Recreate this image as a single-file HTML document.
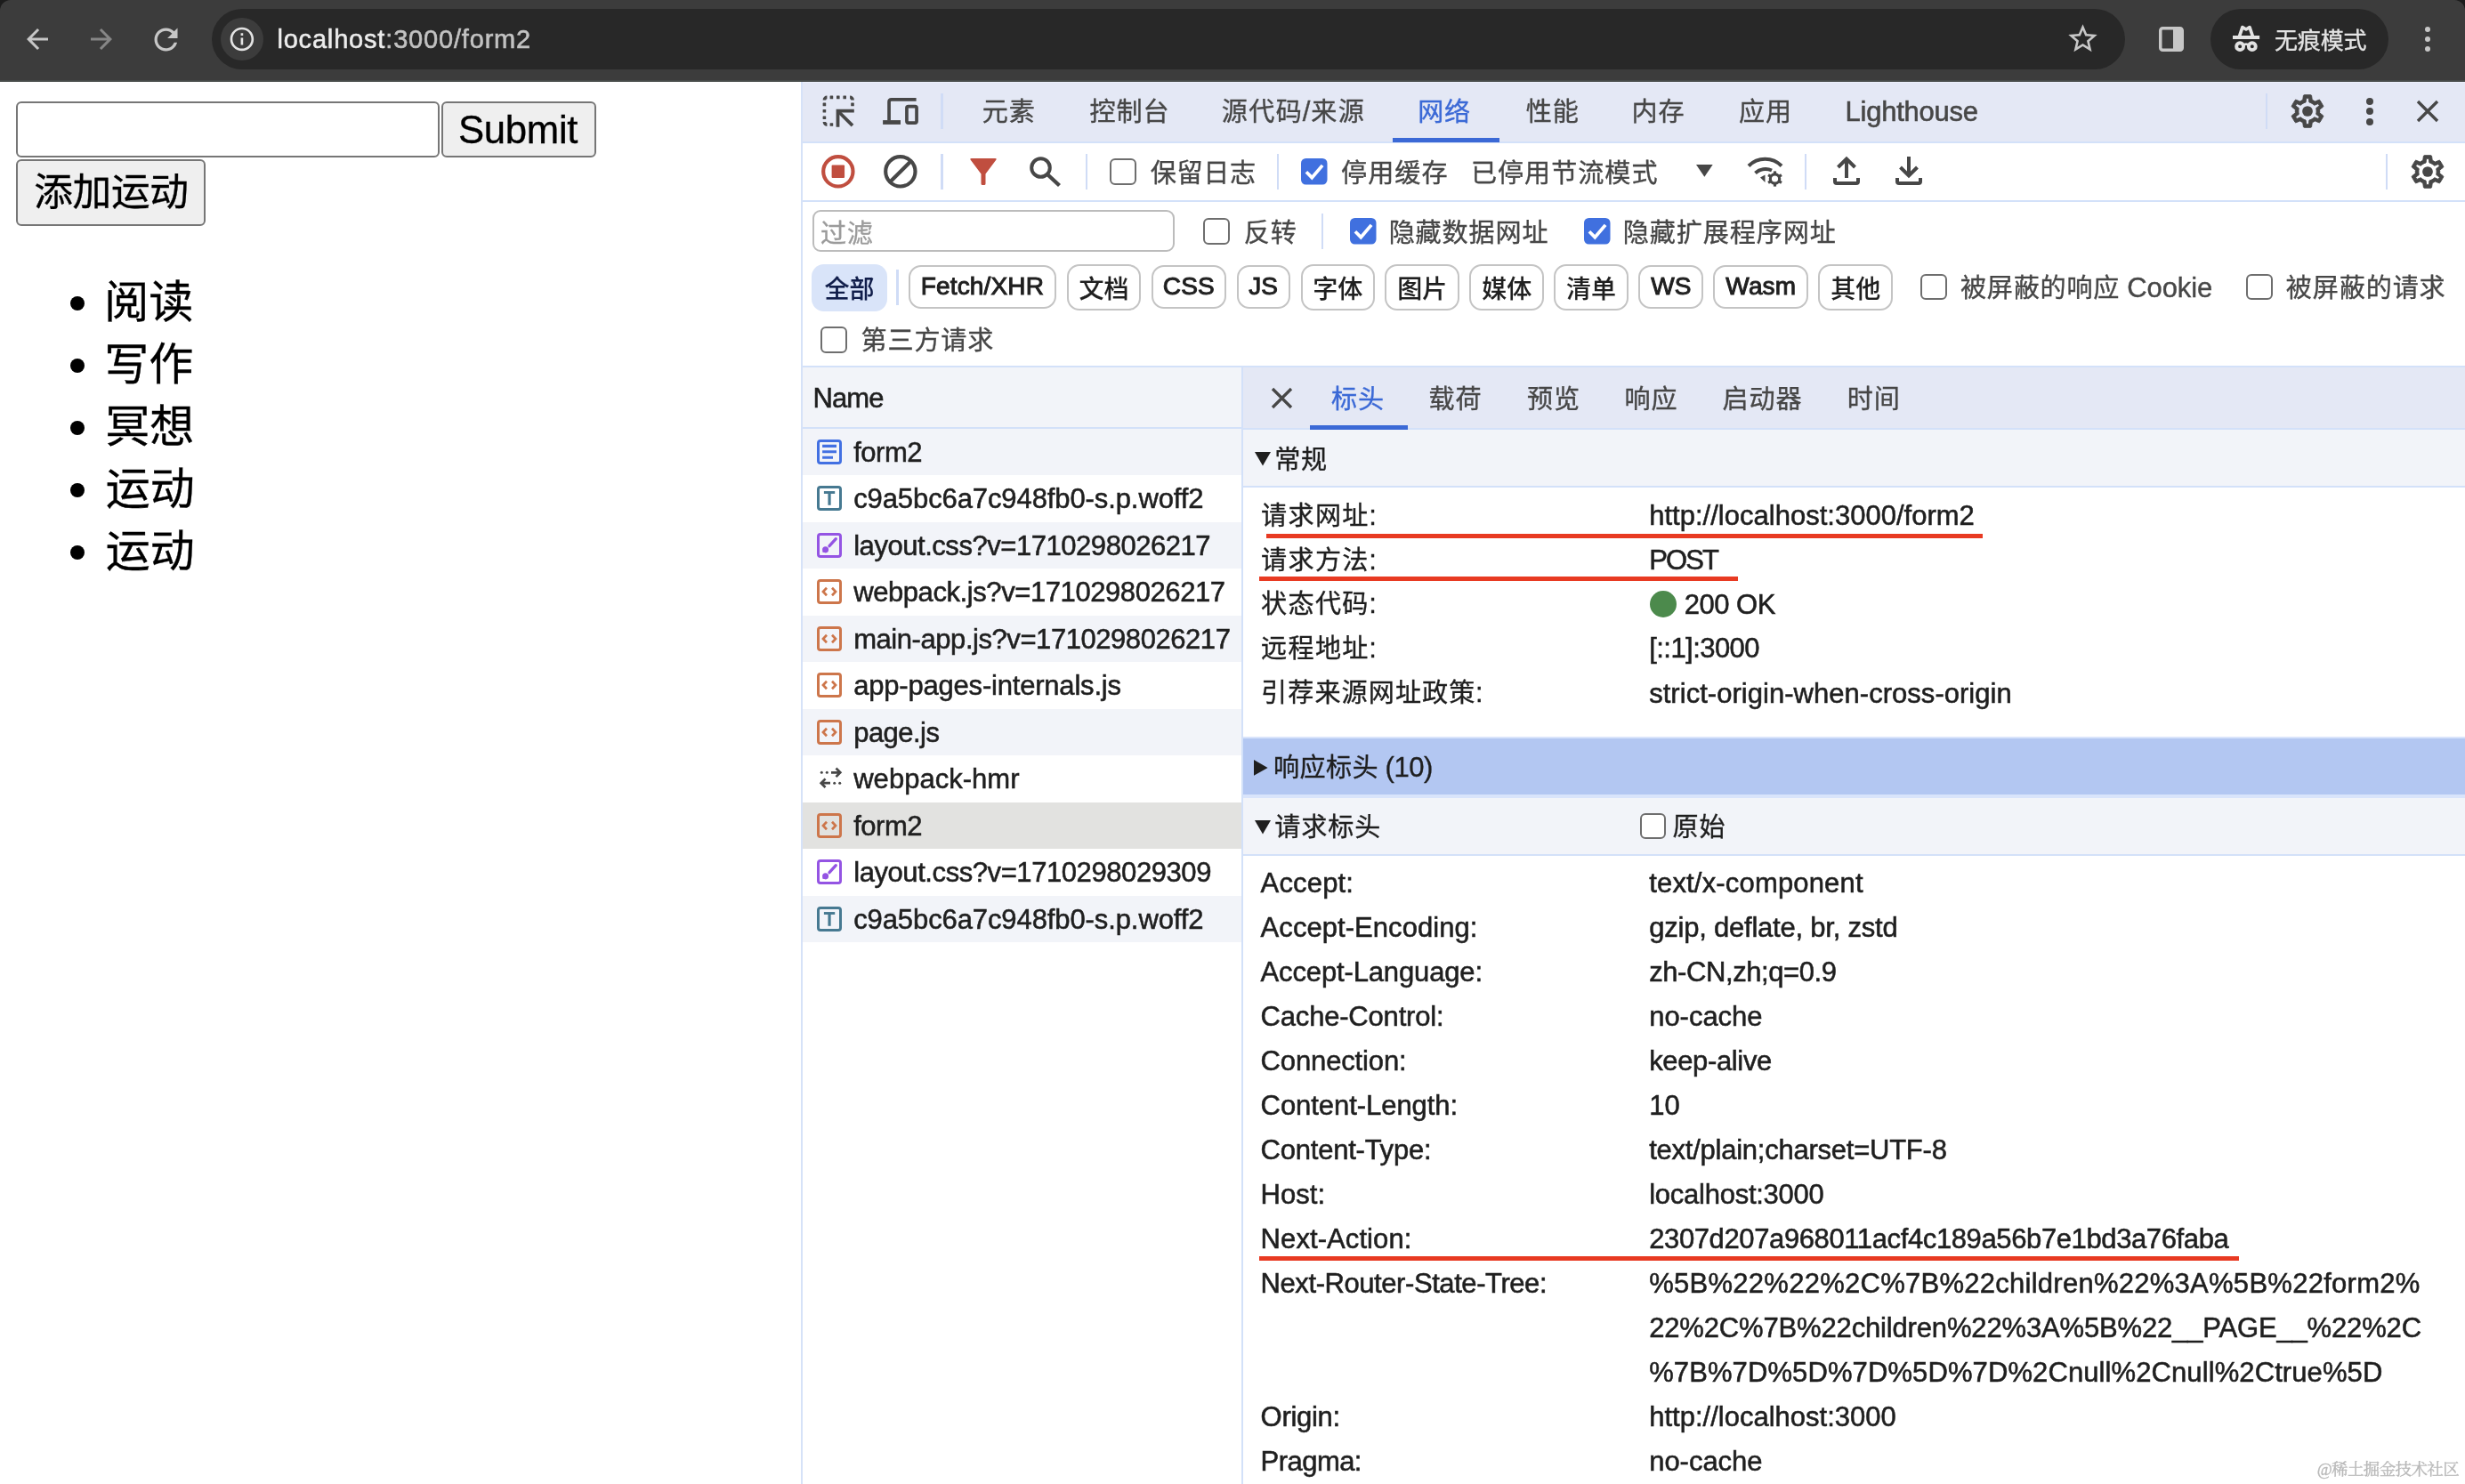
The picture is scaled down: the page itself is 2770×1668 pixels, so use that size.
<!DOCTYPE html>
<html lang="zh-CN"><head><meta charset="utf-8"><title>localhost:3000/form2</title>
<style>
html,body{margin:0;padding:0;}
body{width:2770px;height:1668px;overflow:hidden;background:#fff;position:relative;font-family:"Liberation Sans","Noto Sans CJK SC",sans-serif;will-change:transform;}
div{position:absolute;box-sizing:border-box;}
svg{position:absolute;overflow:visible;}
.t{white-space:nowrap;-webkit-text-stroke:0.35px;}
.l{-webkit-text-stroke:0.55px;}
.mc{font-weight:500;-webkit-text-stroke:0.1px;}
.ml{font-weight:400;-webkit-text-stroke:1px;letter-spacing:0.15px;}
</style></head>
<body>
<div style="left:0px;top:0px;width:2770px;height:92px;background:#3c3c3c;"></div>
<div style="left:0px;top:89.5px;width:2770px;height:2.4px;background:#464a48;"></div>
<svg style="left:0px;top:0px" width="14" height="14" viewBox="0 0 14 14" ><path d="M0 0H12A12 12 0 0 0 0 12Z" fill="#1c1c1c"/></svg>
<svg style="left:2756px;top:0px" width="14" height="14" viewBox="0 0 14 14" ><path d="M14 0H2A12 12 0 0 1 14 12Z" fill="#1c1c1c"/></svg>
<svg style="left:24px;top:26px" width="36" height="36" viewBox="0 0 24 24" ><path d="M20 11H7.83l5.59-5.59L12 4l-8 8 8 8 1.41-1.41L7.83 13H20v-2z" fill="#c7c7c7"/></svg>
<svg style="left:96px;top:26px" width="36" height="36" viewBox="0 0 24 24" ><path d="M12 4l-1.41 1.41L16.17 11H4v2h12.17l-5.58 5.59L12 20l8-8z" fill="#868686"/></svg>
<svg style="left:166.5px;top:24.5px" width="39" height="39" viewBox="0 0 24 24" ><path d="M17.65 6.35C16.2 4.9 14.21 4 12 4c-4.42 0-7.99 3.58-7.99 8s3.57 8 7.99 8c3.73 0 6.84-2.55 7.73-6h-2.08c-.82 2.33-3.04 4-5.65 4-3.31 0-6-2.69-6-6s2.69-6 6-6c1.66 0 3.14.69 4.22 1.78L13 11h7V4l-2.35 2.35z" fill="#c7c7c7"/></svg>
<div style="left:238px;top:9.5px;width:2150px;height:68px;background:#282828;border-radius:34px;"></div>
<div style="left:248px;top:20px;width:48px;height:48px;background:#3c3c3c;border-radius:24px;"></div>
<svg style="left:255.8px;top:28.1px" width="31.8" height="31.8" viewBox="0 0 24 24" ><path d="M11 7h2v2h-2zm0 4h2v6h-2zm1-9C6.48 2 2 6.48 2 12s4.48 10 10 10 10-4.48 10-10S17.52 2 12 2zm0 18c-4.41 0-8-3.59-8-8s3.59-8 8-8 8 3.59 8 8-3.59 8-8 8z" fill="#e3e3e3"/></svg>
<div class="t l" style="left:311.4px;top:24.2px;font-size:29px;line-height:40px;color:#ececec;letter-spacing:0.821px;">localhost<span style="color:#c2c2c2">:3000/form2</span></div>
<svg style="left:2320.5px;top:23.5px" width="39" height="39" viewBox="0 0 24 24" ><path d="M22 9.24l-7.19-.62L12 2 9.19 8.63 2 9.24l5.46 4.73L5.82 21 12 17.27 18.18 21l-1.63-7.03L22 9.24zM12 15.4l-3.76 2.27 1-4.28-3.32-2.88 4.38-.38L12 6.1l1.71 4.04 4.38.38-3.32 2.88 1 4.28L12 15.4z" fill="#c7c7c7"/></svg>
<svg style="left:2426px;top:30px" width="28" height="28" viewBox="0 0 28 28" ><rect x="1.75" y="1.75" width="24.5" height="24.5" rx="2.5" fill="none" stroke="#c7c7c7" stroke-width="3.5"/><rect x="16" y="2" width="10" height="24" fill="#c7c7c7"/></svg>
<div style="left:2484px;top:9.5px;width:200px;height:68px;background:#282828;border-radius:34px;"></div>
<svg style="left:2505px;top:26px" width="40" height="36" viewBox="2505 26 40 36" ><g fill="none" stroke="#e3e3e3" stroke-linejoin="round"><path d="M2509 42H2539.100" stroke-width="4"/><path d="M2516.600 40.500L2519.900 30.600L2524 33L2528 30.600L2531.300 40.500" stroke-width="3.700"/><circle cx="2517.100" cy="52.200" r="3.950" stroke-width="3.900"/><circle cx="2530.800" cy="52.200" r="3.950" stroke-width="3.900"/><path d="M2520.300 50.800Q2524 48.300 2527.600 50.800" stroke-width="2.700"/></g></svg>
<div class="t " style="left:2556.0px;top:25.5px;font-size:26px;line-height:40px;color:#e3e3e3;letter-spacing:-0.167px;">无痕模式</div>
<div style="left:2724.8px;top:29.8px;width:6.4px;height:6.4px;background:#c7c7c7;border-radius:50%;"></div>
<div style="left:2724.8px;top:40.8px;width:6.4px;height:6.4px;background:#c7c7c7;border-radius:50%;"></div>
<div style="left:2724.8px;top:51.8px;width:6.4px;height:6.4px;background:#c7c7c7;border-radius:50%;"></div>
<div style="left:18px;top:114px;width:476px;height:63px;background:#fff;border:2px solid #767676;border-radius:6px;"></div>
<div style="left:496px;top:114px;width:174px;height:63px;background:#efefef;border:2px solid #767676;border-radius:6px;"></div>
<div class="t " style="left:514.9px;top:116.0px;font-size:43.7px;line-height:60px;color:#000;letter-spacing:-0.28px;">Submit</div>
<div style="left:18px;top:179px;width:212.5px;height:74.5px;background:#efefef;border:2px solid #767676;border-radius:6px;"></div>
<div class="t " style="left:38.2px;top:186.0px;font-size:43.7px;line-height:60px;color:#000;letter-spacing:-0.3px;">添加运动</div>
<div style="left:79px;top:332.5px;width:16px;height:16px;background:#000;border-radius:50%;"></div>
<div class="t " style="left:117.25px;top:305.3px;font-size:50px;line-height:70px;color:#000;">阅读</div>
<div style="left:79px;top:402.5px;width:16px;height:16px;background:#000;border-radius:50%;"></div>
<div class="t " style="left:117.25px;top:375.3px;font-size:50px;line-height:70px;color:#000;">写作</div>
<div style="left:79px;top:472.5px;width:16px;height:16px;background:#000;border-radius:50%;"></div>
<div class="t " style="left:118.25px;top:445.3px;font-size:50px;line-height:70px;color:#000;">冥想</div>
<div style="left:79px;top:542.5px;width:16px;height:16px;background:#000;border-radius:50%;"></div>
<div class="t " style="left:118.75px;top:515.3px;font-size:50px;line-height:70px;color:#000;">运动</div>
<div style="left:79px;top:612.5px;width:16px;height:16px;background:#000;border-radius:50%;"></div>
<div class="t " style="left:118.75px;top:585.3px;font-size:50px;line-height:70px;color:#000;">运动</div>
<div style="left:900px;top:92px;width:1870px;height:1576px;background:#fff;"></div>
<div style="left:900px;top:92px;width:1.9px;height:1576px;background:#d6e2f8;"></div>
<div style="left:901.9px;top:92px;width:1868.1px;height:66.5px;background:#e4e8f5;"></div>
<div style="left:901.9px;top:92px;width:1868.1px;height:1.2px;background:#ecf0fb;"></div>
<div style="left:901.9px;top:158.5px;width:1868.1px;height:2px;background:#d3e1f9;"></div>
<svg style="left:924px;top:107px" width="35.5" height="35.5" viewBox="0 0 35.5 35.5" ><g fill="#474747"><rect x="8.6" y="0.6" width="3.6" height="3.6" rx="0.5"/><rect x="16" y="0.6" width="3.6" height="3.6" rx="0.5"/><rect x="23.4" y="0.6" width="3.6" height="3.6" rx="0.5"/><rect x="0.6" y="8.6" width="3.6" height="3.6" rx="0.5"/><rect x="0.6" y="16" width="3.6" height="3.6" rx="0.5"/><rect x="0.6" y="23.4" width="3.6" height="3.6" rx="0.5"/><rect x="8.6" y="31.2" width="3.6" height="3.6" rx="0.5"/><rect x="32.2" y="8.6" width="3.6" height="3.6" rx="0.5"/></g><g fill="none" stroke="#474747" stroke-width="3.600"><path d="M2.400 5.400A3 3 0 0 1 5.400 2.400"/><path d="M31.100 2.400A3 3 0 0 1 34.100 5.400"/><path d="M2.400 30.100A3 3 0 0 0 5.400 33.100"/></g><path d="M35.800 17.700H17.500V35.800" fill="none" stroke="#474747" stroke-width="3.800"/><path d="M18.300 18.500L34 34.200" fill="none" stroke="#474747" stroke-width="3.800"/></svg>
<svg style="left:992px;top:110px" width="40" height="30" viewBox="0 0 40 30" ><path d="M37.600 1.900H9.800Q7.050 1.900 7.050 4.600V25.500" fill="none" stroke="#474747" stroke-width="3.700"/><path d="M0.100 27.500H20" fill="none" stroke="#474747" stroke-width="4.800"/><rect x="26.950" y="9.550" width="11.100" height="18.500" rx="1.800" fill="none" stroke="#474747" stroke-width="3.700"/></svg>
<div style="left:1057px;top:104.5px;width:2.5px;height:40px;background:#d0dcf6;"></div>
<div class="t " style="left:1103.25px;top:105.5px;font-size:30px;line-height:40px;color:#474747;"><span style="font-size:29.1px;letter-spacing:0.9px;margin-left:0.45px;margin-right:-0.45px">元素</span></div>
<div class="t " style="left:1224.1px;top:105.5px;font-size:30px;line-height:40px;color:#474747;"><span style="font-size:29.1px;letter-spacing:0.9px;margin-left:0.45px;margin-right:-0.45px">控制台</span></div>
<div class="t " style="left:1372.3px;top:105.5px;font-size:31px;line-height:40px;color:#474747;letter-spacing:0.48px;"><span style="font-size:29.1px;letter-spacing:1.38px;margin-left:0.45px;margin-right:-0.45px">源代码</span>/<span style="font-size:29.1px;letter-spacing:1.38px;margin-left:0.45px;margin-right:-0.45px">来源</span></div>
<div class="t " style="left:1592.7px;top:105.5px;font-size:30px;line-height:40px;color:#3b69d6;"><span style="font-size:29.1px;letter-spacing:0.9px;margin-left:0.45px;margin-right:-0.45px">网络</span></div>
<div class="t " style="left:1714.3px;top:105.5px;font-size:30px;line-height:40px;color:#474747;"><span style="font-size:29.1px;letter-spacing:0.9px;margin-left:0.45px;margin-right:-0.45px">性能</span></div>
<div class="t " style="left:1833.1px;top:105.5px;font-size:30px;line-height:40px;color:#474747;"><span style="font-size:29.1px;letter-spacing:0.9px;margin-left:0.45px;margin-right:-0.45px">内存</span></div>
<div class="t " style="left:1953.55px;top:105.5px;font-size:30px;line-height:40px;color:#474747;"><span style="font-size:29.1px;letter-spacing:0.9px;margin-left:0.45px;margin-right:-0.45px">应用</span></div>
<div class="t  l" style="left:2073.5px;top:105.5px;font-size:31px;line-height:40px;color:#474747;letter-spacing:-0.244px;">Lighthouse</div>
<div style="left:1565px;top:155px;width:120px;height:4.5px;background:#3b69d6;"></div>
<div style="left:2545.5px;top:104.5px;width:2.5px;height:40px;background:#d0dcf6;"></div>
<svg style="left:2571px;top:103px" width="44" height="44" viewBox="0 0 24 24" ><path fill="#474747" stroke="#474747" stroke-width="0.5" stroke-linejoin="round" fill-rule="evenodd" d="M19.43 12.98c.04-.32.07-.64.07-.98s-.03-.66-.07-.98l2.11-1.65c.19-.15.24-.42.12-.64l-2-3.46c-.12-.22-.39-.3-.61-.22l-2.49 1c-.52-.4-1.08-.73-1.69-.98l-.38-2.65C14.46 2.18 14.25 2 14 2h-4c-.25 0-.46.18-.49.42l-.38 2.65c-.61.25-1.17.59-1.69.98l-2.49-1c-.23-.09-.49 0-.61.22l-2 3.46c-.13.22-.07.49.12.64l2.11 1.65c-.04.32-.07.65-.07.98s.03.66.07.98l-2.11 1.65c-.19.15-.24.42-.12.64l2 3.46c.12.22.39.3.61.22l2.49-1c.52.4 1.08.73 1.69.98l.38 2.65c.03.24.24.42.49.42h4c.25 0 .46-.18.49-.42l.38-2.65c.61-.25 1.17-.59 1.69-.98l2.49 1c.23.09.49 0 .61-.22l2-3.46c.12-.22.07-.49-.12-.64l-2.11-1.65zm-1.98-1.71c.04.31.05.52.05.73 0 .21-.02.43-.05.73l-.14 1.13.89.7 1.08.84-.7 1.21-1.27-.51-1.04-.42-.9.68c-.43.32-.84.56-1.25.73l-1.06.43-.16 1.13-.2 1.35h-1.4l-.19-1.35-.16-1.13-1.06-.43c-.43-.18-.83-.41-1.23-.71l-.91-.7-1.06.43-1.27.51-.7-1.21 1.08-.84.89-.7-.14-1.13c-.03-.31-.05-.54-.05-.74s.02-.43.05-.73l.14-1.13-.89-.7-1.08-.84.7-1.21 1.27.51 1.04.42.9-.68c.43-.32.84-.56 1.25-.73l1.060-.43.16-1.13.2-1.35h1.39l.19 1.350.16 1.130 1.060.430c.430.180.830.410 1.230.710l.910.700 1.060-.430 1.270-.510.700 1.210-1.070.850-.890.700.140 1.130z"/><circle cx="12" cy="12" r="3.2" fill="#474747"/></svg>
<div style="left:2659px;top:109.5px;width:8px;height:8px;background:#474747;border-radius:50%;"></div>
<div style="left:2659px;top:121px;width:8px;height:8px;background:#474747;border-radius:50%;"></div>
<div style="left:2659px;top:132.5px;width:8px;height:8px;background:#474747;border-radius:50%;"></div>
<svg style="left:2716px;top:113px" width="24" height="24" viewBox="0 0 24 24" ><path d="M1 1L23 23M23 1L1 23" stroke="#474747" stroke-width="3.4" fill="none"/></svg>
<div style="left:901.9px;top:225.3px;width:1868.1px;height:2px;background:#d3e1f9;"></div>
<svg style="left:923px;top:174px" width="37.7" height="37.7" viewBox="0 0 38 38" ><circle cx="19" cy="19" r="16.8" fill="none" stroke="#c04e3f" stroke-width="4.2"/><rect x="11.7" y="11.7" width="14.6" height="14.6" rx="1" fill="#c04e3f"/></svg>
<svg style="left:993px;top:174px" width="37.7" height="37.7" viewBox="0 0 38 38" ><circle cx="19" cy="19" r="16.8" fill="none" stroke="#474747" stroke-width="4.2"/><path d="M30.5 7.5L7.5 30.5" stroke="#474747" stroke-width="4.2"/></svg>
<div style="left:1057px;top:173px;width:2.5px;height:40px;background:#d0dcf6;"></div>
<svg style="left:1090px;top:178px" width="30" height="30" viewBox="0 0 30 30" ><path d="M1.5 0H28.5Q30.5 0 29.3 1.8L17.5 17.5V28.5Q17.500 30 16 30H14Q12.500 30 12.500 28.500V17.500L0.700 1.800Q-0.500 0 1.500 0Z" fill="#c04e3f"/></svg>
<svg style="left:1157px;top:176px" width="35" height="34" viewBox="0 0 35 34" ><circle cx="12.5" cy="12.5" r="10.3" fill="none" stroke="#474747" stroke-width="4"/><path d="M20 20L33.500 32.500" stroke="#474747" stroke-width="4.400"/></svg>
<div style="left:1220px;top:173px;width:2px;height:40px;background:#d0dcf6;"></div>
<div style="left:1247px;top:178.3px;width:29.5px;height:29.5px;background:#fff;border:2.5px solid #6e6e6e;border-radius:6px;"></div>
<div class="t " style="left:1292.4px;top:174.5px;font-size:30px;line-height:40px;color:#474747;letter-spacing:-0.267px;"><span style="font-size:29.1px;letter-spacing:0.63px;margin-left:0.45px;margin-right:-0.45px">保留日志</span></div>
<div style="left:1435px;top:173px;width:2px;height:40px;background:#d0dcf6;"></div>
<svg style="left:1462px;top:178.3px" width="29.5" height="29.5" viewBox="0 0 30 30" ><rect width="30" height="30" rx="5.5" fill="#4070df"/><path d="M6 15.500L12.500 22L24.500 8" fill="none" stroke="#fff" stroke-width="3.800"/></svg>
<div class="t " style="left:1506.5px;top:174.5px;font-size:30px;line-height:40px;color:#474747;letter-spacing:0.2px;"><span style="font-size:29.1px;letter-spacing:1.1px;margin-left:0.45px;margin-right:-0.45px">停用缓存</span></div>
<div class="t " style="left:1652.5px;top:174.5px;font-size:30px;line-height:40px;color:#474747;letter-spacing:0.083px;"><span style="font-size:29.1px;letter-spacing:0.98px;margin-left:0.45px;margin-right:-0.45px">已停用节流模式</span></div>
<svg style="left:1906.3px;top:185px" width="18.7" height="13.8" viewBox="0 0 18.7 13.8" ><path d="M0 0H18.700L9.350 13.800Z" fill="#474747"/></svg>
<svg style="left:1963px;top:175px" width="41" height="34" viewBox="0 0 41 34" ><path d="M2 11.5A26 26 0 0 1 39 11.500" fill="none" stroke="#474747" stroke-width="4"/><path d="M9.500 19.500A17.500 17.500 0 0 1 28 16.500" fill="none" stroke="#474747" stroke-width="4"/><path d="M15 24.500L20.500 21.500V30Z" fill="#474747"/><g transform="translate(31.500 26)"><circle r="5.200" fill="none" stroke="#474747" stroke-width="3.200"/><rect x="-1.600" y="-8.600" width="3.200" height="3.400" fill="#474747" transform="rotate(0)"/><rect x="-1.600" y="-8.600" width="3.200" height="3.400" fill="#474747" transform="rotate(60)"/><rect x="-1.600" y="-8.600" width="3.200" height="3.400" fill="#474747" transform="rotate(120)"/><rect x="-1.600" y="-8.600" width="3.200" height="3.400" fill="#474747" transform="rotate(180)"/><rect x="-1.600" y="-8.600" width="3.200" height="3.400" fill="#474747" transform="rotate(240)"/><rect x="-1.600" y="-8.600" width="3.200" height="3.400" fill="#474747" transform="rotate(300)"/></g></svg>
<div style="left:2028px;top:173px;width:2px;height:40px;background:#d0dcf6;"></div>
<svg style="left:2060px;top:176px" width="30" height="32" viewBox="0 0 30 32" ><path d="M15 24V3.500M5.500 12L15 2.500L24.500 12" fill="none" stroke="#474747" stroke-width="4"/><path d="M2 24V28Q2 30 4 30H26Q28 30 28 28V24" fill="none" stroke="#474747" stroke-width="4"/></svg>
<svg style="left:2130px;top:176px" width="30" height="32" viewBox="0 0 30 32" ><path d="M15 0V20.500M5.500 12L15 21.500L24.500 12" fill="none" stroke="#474747" stroke-width="4"/><path d="M2 24V28Q2 30 4 30H26Q28 30 28 28V24" fill="none" stroke="#474747" stroke-width="4"/></svg>
<div style="left:2680.5px;top:173px;width:2.5px;height:40px;background:#d0dcf6;"></div>
<svg style="left:2706px;top:171px" width="44" height="44" viewBox="0 0 24 24" ><path fill="#474747" stroke="#474747" stroke-width="0.5" stroke-linejoin="round" fill-rule="evenodd" d="M19.43 12.98c.04-.32.07-.64.07-.98s-.03-.66-.07-.98l2.11-1.65c.19-.15.24-.42.12-.64l-2-3.46c-.12-.22-.39-.3-.61-.22l-2.49 1c-.52-.4-1.08-.73-1.69-.98l-.38-2.65C14.46 2.18 14.25 2 14 2h-4c-.25 0-.46.18-.49.42l-.38 2.65c-.61.25-1.17.59-1.69.98l-2.49-1c-.23-.09-.49 0-.61.22l-2 3.46c-.13.22-.07.49.12.64l2.11 1.65c-.04.32-.07.65-.07.98s.03.66.07.98l-2.11 1.65c-.19.15-.24.42-.12.64l2 3.46c.12.22.39.3.61.22l2.49-1c.52.4 1.08.73 1.69.98l.38 2.65c.03.24.24.42.49.42h4c.25 0 .46-.18.49-.42l.38-2.65c.61-.25 1.17-.59 1.69-.98l2.49 1c.23.09.49 0 .61-.22l2-3.46c.12-.22.07-.49-.12-.64l-2.11-1.65zm-1.98-1.71c.04.31.05.52.05.73 0 .21-.02.43-.05.73l-.14 1.13.89.7 1.08.84-.7 1.21-1.27-.51-1.04-.42-.9.68c-.43.32-.84.56-1.25.73l-1.06.43-.16 1.13-.2 1.35h-1.4l-.19-1.35-.16-1.13-1.06-.43c-.43-.18-.83-.41-1.23-.71l-.91-.7-1.06.43-1.27.51-.7-1.21 1.08-.84.89-.7-.14-1.13c-.03-.31-.05-.54-.05-.74s.02-.43.05-.73l.14-1.13-.89-.7-1.08-.84.7-1.21 1.27.51 1.04.42.9-.68c.43-.32.84-.56 1.25-.73l1.060-.43.16-1.13.2-1.35h1.39l.19 1.350.16 1.130 1.060.430c.430.180.830.410 1.230.710l.910.700 1.060-.430 1.270-.510.700 1.210-1.070.850-.890.700.140 1.130z"/><circle cx="12" cy="12" r="3.2" fill="#474747"/></svg>
<div style="left:912.5px;top:235.5px;width:407px;height:47.5px;background:#fff;border:2px solid #bcbcbc;border-radius:9px;"></div>
<div class="t " style="left:921.45px;top:242.5px;font-size:30px;line-height:40px;color:#9b9b9b;"><span style="font-size:29.1px;letter-spacing:0.9px;margin-left:0.45px;margin-right:-0.45px">过滤</span></div>
<div style="left:1352.3px;top:245.2px;width:29.5px;height:29.5px;background:#fff;border:2.5px solid #6e6e6e;border-radius:6px;"></div>
<div class="t " style="left:1397.3px;top:242.0px;font-size:30px;line-height:40px;color:#474747;"><span style="font-size:29.1px;letter-spacing:0.9px;margin-left:0.45px;margin-right:-0.45px">反转</span></div>
<div style="left:1485px;top:240px;width:2px;height:40px;background:#d0dcf6;"></div>
<svg style="left:1517px;top:245.2px" width="29.5" height="29.5" viewBox="0 0 30 30" ><rect width="30" height="30" rx="5.5" fill="#4070df"/><path d="M6 15.500L12.500 22L24.500 8" fill="none" stroke="#fff" stroke-width="3.800"/></svg>
<div class="t " style="left:1560.2px;top:242.0px;font-size:30px;line-height:40px;color:#474747;"><span style="font-size:29.1px;letter-spacing:0.9px;margin-left:0.45px;margin-right:-0.45px">隐藏数据网址</span></div>
<svg style="left:1780px;top:245.2px" width="29.5" height="29.5" viewBox="0 0 30 30" ><rect width="30" height="30" rx="5.5" fill="#4070df"/><path d="M6 15.500L12.500 22L24.500 8" fill="none" stroke="#fff" stroke-width="3.800"/></svg>
<div class="t " style="left:1823.2px;top:242.0px;font-size:30px;line-height:40px;color:#474747;letter-spacing:0.043px;"><span style="font-size:29.1px;letter-spacing:0.94px;margin-left:0.45px;margin-right:-0.45px">隐藏扩展程序网址</span></div>
<div style="left:912px;top:297px;width:85px;height:53px;background:#d9e4f9;border-radius:14px;"></div>
<div class="t mc" style="left:926.5px;top:305.8px;font-size:28px;line-height:40px;color:#101d4a;">全部</div>
<div style="left:1007.3px;top:303px;width:2.4px;height:40px;background:#d0dcf6;"></div>
<div class="t ml" style="left:1020.5px;top:298.3px;width:166.8px;height:48.3px;border:2px solid #c4c4c4;border-radius:14px;font-size:28px;line-height:44.5px;text-align:center;color:#1f1f1f;">Fetch/XHR</div>
<div class="t mc" style="left:1198.6px;top:297.3px;width:83.7px;height:51.8px;border:2px solid #c4c4c4;border-radius:14px;font-size:28px;line-height:53px;text-align:center;color:#1f1f1f;">文档</div>
<div class="t ml" style="left:1293.6px;top:298.3px;width:84.4px;height:48.3px;border:2px solid #c4c4c4;border-radius:14px;font-size:28px;line-height:44.5px;text-align:center;color:#1f1f1f;">CSS</div>
<div class="t ml" style="left:1389.6px;top:298.3px;width:60.2px;height:48.3px;border:2px solid #c4c4c4;border-radius:14px;font-size:28px;line-height:44.5px;text-align:center;color:#1f1f1f;">JS</div>
<div class="t mc" style="left:1461.5px;top:297.3px;width:83.7px;height:51.8px;border:2px solid #c4c4c4;border-radius:14px;font-size:28px;line-height:53px;text-align:center;color:#1f1f1f;">字体</div>
<div class="t mc" style="left:1556.4px;top:297.3px;width:83.6px;height:51.8px;border:2px solid #c4c4c4;border-radius:14px;font-size:28px;line-height:53px;text-align:center;color:#1f1f1f;">图片</div>
<div class="t mc" style="left:1651.4px;top:297.3px;width:83.9px;height:51.8px;border:2px solid #c4c4c4;border-radius:14px;font-size:28px;line-height:53px;text-align:center;color:#1f1f1f;">媒体</div>
<div class="t mc" style="left:1746.3px;top:297.3px;width:83.6px;height:51.8px;border:2px solid #c4c4c4;border-radius:14px;font-size:28px;line-height:53px;text-align:center;color:#1f1f1f;">清单</div>
<div class="t ml" style="left:1841.4px;top:298.3px;width:72.9px;height:48.3px;border:2px solid #c4c4c4;border-radius:14px;font-size:28px;line-height:44.5px;text-align:center;color:#1f1f1f;">WS</div>
<div class="t ml" style="left:1925.4px;top:298.3px;width:106.8px;height:48.3px;border:2px solid #c4c4c4;border-radius:14px;font-size:28px;line-height:44.5px;text-align:center;color:#1f1f1f;">Wasm</div>
<div class="t mc" style="left:2043.4px;top:297.3px;width:83.6px;height:51.8px;border:2px solid #c4c4c4;border-radius:14px;font-size:28px;line-height:53px;text-align:center;color:#1f1f1f;">其他</div>
<div style="left:2158px;top:307.5px;width:29.5px;height:29.5px;background:#fff;border:2.5px solid #6e6e6e;border-radius:6px;"></div>
<div class="t " style="left:2202.5px;top:304.0px;font-size:31px;line-height:40px;color:#474747;letter-spacing:-0.108px;"><span style="font-size:29.1px;letter-spacing:0.79px;margin-left:0.45px;margin-right:-0.45px">被屏蔽的响应</span> Cookie</div>
<div style="left:2524.3px;top:307.5px;width:29.5px;height:29.5px;background:#fff;border:2.5px solid #6e6e6e;border-radius:6px;"></div>
<div class="t " style="left:2568.3px;top:304.0px;font-size:30px;line-height:40px;color:#474747;letter-spacing:-0.02px;"><span style="font-size:29.1px;letter-spacing:0.88px;margin-left:0.45px;margin-right:-0.45px">被屏蔽的请求</span></div>
<div style="left:922px;top:367px;width:29.5px;height:29.5px;background:#fff;border:2.5px solid #6e6e6e;border-radius:6px;"></div>
<div class="t " style="left:967.1px;top:362.5px;font-size:30px;line-height:40px;color:#474747;letter-spacing:-0.05px;"><span style="font-size:29.1px;letter-spacing:0.85px;margin-left:0.45px;margin-right:-0.45px">第三方请求</span></div>
<div style="left:901.9px;top:411px;width:1868.1px;height:2px;background:#d3e1f9;"></div>
<div style="left:901.9px;top:413px;width:493.1px;height:68px;background:#f2f4f9;"></div>
<div style="left:901.9px;top:480px;width:493.1px;height:2px;background:#d3e1f9;"></div>
<div class="t  l" style="left:913.5px;top:427.5px;font-size:31px;line-height:40px;color:#1f1f1f;letter-spacing:-0.933px;">Name</div>
<div style="left:901.9px;top:481.6px;width:493.1px;height:52.7px;background:#f2f4f9;"></div>
<svg style="left:918px;top:493.8px" width="28" height="28" viewBox="0 0 28 28" ><rect x="1.5" y="1.5" width="25" height="25" rx="2.5" fill="none" stroke="#4270e2" stroke-width="3"/><path d="M6.100 7.400H22M6.100 13.800H22M6.100 20.200H18" stroke="#4270e2" stroke-width="3.100" fill="none"/></svg>
<div class="t  l" style="left:959.2px;top:488.8px;font-size:31px;line-height:40px;color:#1f1f1f;letter-spacing:-0.475px;">form2</div>
<div style="left:901.9px;top:534px;width:493.1px;height:52.8px;background:#fff;"></div>
<svg style="left:918px;top:546.25px" width="28" height="28" viewBox="0 0 28 28" ><rect x="1.5" y="1.5" width="25" height="25" rx="2.5" fill="none" stroke="#467991" stroke-width="3"/><path d="M7.900 7.500H20.200" stroke="#467991" stroke-width="2.900" fill="none"/><path d="M14.050 7.500V21.800" stroke="#467991" stroke-width="3.200" fill="none"/></svg>
<div class="t  l" style="left:959.2px;top:541.25px;font-size:31px;line-height:40px;color:#1f1f1f;letter-spacing:-0.1px;">c9a5bc6a7c948fb0-s.p.woff2</div>
<div style="left:901.9px;top:586.5px;width:493.1px;height:52.6px;background:#f2f4f9;"></div>
<svg style="left:918px;top:598.65px" width="28" height="28" viewBox="0 0 28 28" ><rect x="1.5" y="1.5" width="25" height="25" rx="2.5" fill="none" stroke="#9454e3" stroke-width="3"/><path d="M21.300 6.700L14 14.700" stroke="#9454e3" stroke-width="3.300" stroke-linecap="round" fill="none"/><circle cx="9.600" cy="18.800" r="3.500" fill="#9454e3"/><path d="M5.800 21C7.800 20.600 6.800 18.500 7.500 17.500L11 22C9.500 22.500 7 22 5.800 21Z" fill="#9454e3"/></svg>
<div class="t  l" style="left:959.2px;top:593.65px;font-size:31px;line-height:40px;color:#1f1f1f;letter-spacing:-0.456px;">layout.css?v=1710298026217</div>
<div style="left:901.9px;top:638.8px;width:493.1px;height:53.1px;background:#fff;"></div>
<svg style="left:918px;top:651.2px" width="28" height="28" viewBox="0 0 28 28" ><rect x="1.5" y="1.5" width="25" height="25" rx="2.5" fill="none" stroke="#cd764b" stroke-width="3"/><path d="M11 9.800L7 14L11 18.200M17 9.800L21 14L17 18.200" stroke="#cd764b" stroke-width="2.700" fill="none"/></svg>
<div class="t  l" style="left:959.2px;top:646.2px;font-size:31px;line-height:40px;color:#1f1f1f;letter-spacing:-0.42px;">webpack.js?v=1710298026217</div>
<div style="left:901.9px;top:691.6px;width:493.1px;height:52.6px;background:#f2f4f9;"></div>
<svg style="left:918px;top:703.75px" width="28" height="28" viewBox="0 0 28 28" ><rect x="1.5" y="1.5" width="25" height="25" rx="2.5" fill="none" stroke="#cd764b" stroke-width="3"/><path d="M11 9.800L7 14L11 18.200M17 9.800L21 14L17 18.200" stroke="#cd764b" stroke-width="2.700" fill="none"/></svg>
<div class="t  l" style="left:959.2px;top:698.75px;font-size:31px;line-height:40px;color:#1f1f1f;letter-spacing:-0.442px;">main-app.js?v=1710298026217</div>
<div style="left:901.9px;top:743.9px;width:493.1px;height:53.1px;background:#fff;"></div>
<svg style="left:918px;top:756.3px" width="28" height="28" viewBox="0 0 28 28" ><rect x="1.5" y="1.5" width="25" height="25" rx="2.5" fill="none" stroke="#cd764b" stroke-width="3"/><path d="M11 9.800L7 14L11 18.200M17 9.800L21 14L17 18.200" stroke="#cd764b" stroke-width="2.700" fill="none"/></svg>
<div class="t  l" style="left:959.2px;top:751.3px;font-size:31px;line-height:40px;color:#1f1f1f;letter-spacing:-0.2px;">app-pages-internals.js</div>
<div style="left:901.9px;top:796.7px;width:493.1px;height:52.3px;background:#f2f4f9;"></div>
<svg style="left:918px;top:808.7px" width="28" height="28" viewBox="0 0 28 28" ><rect x="1.5" y="1.5" width="25" height="25" rx="2.5" fill="none" stroke="#cd764b" stroke-width="3"/><path d="M11 9.800L7 14L11 18.200M17 9.800L21 14L17 18.200" stroke="#cd764b" stroke-width="2.700" fill="none"/></svg>
<div class="t  l" style="left:959.2px;top:803.7px;font-size:31px;line-height:40px;color:#1f1f1f;letter-spacing:-0.533px;">page.js</div>
<div style="left:901.9px;top:848.7px;width:493.1px;height:53.7px;background:#fff;"></div>
<svg style="left:918px;top:860.1px" width="28" height="28" viewBox="0 0 28 28" ><g fill="#474747"><circle cx="5.300" cy="8.300" r="1.500"/><circle cx="11.300" cy="8.300" r="1.500"/><circle cx="19.700" cy="20.200" r="1.500"/><circle cx="25.700" cy="20.200" r="1.500"/></g><path d="M16 8.300H26M21.500 3.500L26.300 8.300L21.500 13.100" stroke="#474747" stroke-width="2.700" fill="none"/><path d="M15 20.200H5M9.500 15.400L4.700 20.200L9.500 25" stroke="#474747" stroke-width="2.700" fill="none"/></svg>
<div class="t  l" style="left:959.2px;top:856.4px;font-size:31px;line-height:40px;color:#1f1f1f;letter-spacing:0.03px;">webpack-hmr</div>
<div style="left:901.9px;top:902.1px;width:493.1px;height:51.9px;background:#e2e2e0;"></div>
<svg style="left:918px;top:913.9px" width="28" height="28" viewBox="0 0 28 28" ><rect x="1.5" y="1.5" width="25" height="25" rx="2.5" fill="none" stroke="#cd764b" stroke-width="3"/><path d="M11 9.800L7 14L11 18.200M17 9.800L21 14L17 18.200" stroke="#cd764b" stroke-width="2.700" fill="none"/></svg>
<div class="t  l" style="left:959.2px;top:908.9px;font-size:31px;line-height:40px;color:#1f1f1f;letter-spacing:-0.475px;">form2</div>
<div style="left:901.9px;top:953.7px;width:493.1px;height:53.7px;background:#fff;"></div>
<svg style="left:918px;top:966.4px" width="28" height="28" viewBox="0 0 28 28" ><rect x="1.5" y="1.5" width="25" height="25" rx="2.5" fill="none" stroke="#9454e3" stroke-width="3"/><path d="M21.300 6.700L14 14.700" stroke="#9454e3" stroke-width="3.300" stroke-linecap="round" fill="none"/><circle cx="9.600" cy="18.800" r="3.500" fill="#9454e3"/><path d="M5.800 21C7.800 20.600 6.800 18.500 7.500 17.500L11 22C9.500 22.500 7 22 5.800 21Z" fill="#9454e3"/></svg>
<div class="t  l" style="left:959.2px;top:961.4px;font-size:31px;line-height:40px;color:#1f1f1f;letter-spacing:-0.424px;">layout.css?v=1710298029309</div>
<div style="left:901.9px;top:1007.1px;width:493.1px;height:51.8px;background:#f2f4f9;"></div>
<svg style="left:918px;top:1018.85px" width="28" height="28" viewBox="0 0 28 28" ><rect x="1.5" y="1.5" width="25" height="25" rx="2.5" fill="none" stroke="#467991" stroke-width="3"/><path d="M7.900 7.500H20.200" stroke="#467991" stroke-width="2.900" fill="none"/><path d="M14.050 7.500V21.800" stroke="#467991" stroke-width="3.200" fill="none"/></svg>
<div class="t  l" style="left:959.2px;top:1013.85px;font-size:31px;line-height:40px;color:#1f1f1f;letter-spacing:-0.1px;">c9a5bc6a7c948fb0-s.p.woff2</div>
<div style="left:1394.5px;top:413px;width:2.5px;height:1255px;background:#d3e1f9;"></div>
<div style="left:1397px;top:413px;width:1373px;height:68px;background:#e4e8f5;"></div>
<div style="left:1397px;top:480.5px;width:1373px;height:2px;background:#d3e1f9;"></div>
<svg style="left:1428.5px;top:436px" width="23" height="23" viewBox="0 0 23 23" ><path d="M1 1L22 22M22 1L1 22" stroke="#474747" stroke-width="3.300" fill="none"/></svg>
<div class="t " style="left:1495.6px;top:428.5px;font-size:30px;line-height:40px;color:#3b69d6;"><span style="font-size:29.1px;letter-spacing:0.9px;margin-left:0.45px;margin-right:-0.45px">标头</span></div>
<div class="t " style="left:1605.15px;top:428.5px;font-size:30px;line-height:40px;color:#474747;"><span style="font-size:29.1px;letter-spacing:0.9px;margin-left:0.45px;margin-right:-0.45px">载荷</span></div>
<div class="t " style="left:1715.5px;top:428.5px;font-size:30px;line-height:40px;color:#474747;"><span style="font-size:29.1px;letter-spacing:0.9px;margin-left:0.45px;margin-right:-0.45px">预览</span></div>
<div class="t " style="left:1825.1px;top:428.5px;font-size:30px;line-height:40px;color:#474747;"><span style="font-size:29.1px;letter-spacing:0.9px;margin-left:0.45px;margin-right:-0.45px">响应</span></div>
<div class="t " style="left:1935.0px;top:428.5px;font-size:30px;line-height:40px;color:#474747;"><span style="font-size:29.1px;letter-spacing:0.9px;margin-left:0.45px;margin-right:-0.45px">启动器</span></div>
<div class="t " style="left:2075.25px;top:428.5px;font-size:30px;line-height:40px;color:#474747;"><span style="font-size:29.1px;letter-spacing:0.9px;margin-left:0.45px;margin-right:-0.45px">时间</span></div>
<div style="left:1472px;top:478px;width:110px;height:4.5px;background:#3b69d6;"></div>
<div style="left:1397px;top:482.5px;width:1373px;height:63px;background:#f2f4f9;"></div>
<div style="left:1397px;top:545.5px;width:1373px;height:2px;background:#d3e1f9;"></div>
<svg style="left:1409.6px;top:508.3px" width="18" height="15.6" viewBox="0 0 18 15.6" ><path d="M0 0H18L9 15.600Z" fill="#1f1f1f"/></svg>
<div class="t " style="left:1431.7px;top:496.5px;font-size:30px;line-height:40px;color:#1f1f1f;"><span style="font-size:29.1px;letter-spacing:0.9px;margin-left:0.45px;margin-right:-0.45px">常规</span></div>
<div class="t " style="left:1416.6px;top:559.5px;font-size:31px;line-height:40px;color:#1f1f1f;letter-spacing:0.425px;"><span style="font-size:29.1px;letter-spacing:1.33px;margin-left:0.45px;margin-right:-0.45px">请求网址</span>:</div>
<div class="t  l" style="left:1853.2px;top:560.0px;font-size:31px;line-height:40px;color:#1f1f1f;letter-spacing:0.012px;">http://localhost:3000/form2</div>
<div class="t " style="left:1416.6px;top:609.5px;font-size:31px;line-height:40px;color:#1f1f1f;letter-spacing:0.425px;"><span style="font-size:29.1px;letter-spacing:1.33px;margin-left:0.45px;margin-right:-0.45px">请求方法</span>:</div>
<div class="t  l" style="left:1853.2px;top:610.0px;font-size:31px;line-height:40px;color:#1f1f1f;letter-spacing:-1.9px;">POST</div>
<div class="t " style="left:1416.6px;top:659.0px;font-size:31px;line-height:40px;color:#1f1f1f;letter-spacing:0.425px;"><span style="font-size:29.1px;letter-spacing:1.33px;margin-left:0.45px;margin-right:-0.45px">状态代码</span>:</div>
<div class="t " style="left:1416.6px;top:708.5px;font-size:31px;line-height:40px;color:#1f1f1f;letter-spacing:0.425px;"><span style="font-size:29.1px;letter-spacing:1.33px;margin-left:0.45px;margin-right:-0.45px">远程地址</span>:</div>
<div class="t  l" style="left:1853.2px;top:709.0px;font-size:31px;line-height:40px;color:#1f1f1f;letter-spacing:-0.544px;">[::1]:3000</div>
<div class="t " style="left:1416.6px;top:759.0px;font-size:31px;line-height:40px;color:#1f1f1f;letter-spacing:0.175px;"><span style="font-size:29.1px;letter-spacing:1.08px;margin-left:0.45px;margin-right:-0.45px">引荐来源网址政策</span>:</div>
<div class="t  l" style="left:1853.2px;top:759.5px;font-size:31px;line-height:40px;color:#1f1f1f;letter-spacing:0.033px;">strict-origin-when-cross-origin</div>
<div style="left:1854px;top:664px;width:30px;height:30px;background:#4c8a4c;border-radius:50%;"></div>
<div class="t  l" style="left:1892.7px;top:659.5px;font-size:31px;line-height:40px;color:#1f1f1f;letter-spacing:-0.5px;">200 OK</div>
<div style="left:1422.5px;top:600.2px;width:805.5px;height:4.6px;background:#e83a22;"></div>
<div style="left:1415px;top:648.2px;width:538px;height:4.6px;background:#e83a22;"></div>
<div style="left:1397px;top:827.8px;width:1373px;height:2.5px;background:#d9e4fb;"></div>
<div style="left:1397px;top:829.9px;width:1373px;height:62.8px;background:#b3c7f2;"></div>
<div style="left:1397px;top:892.7px;width:1373px;height:4.4px;background:#d9e4fb;"></div>
<svg style="left:1409.3px;top:853.8px" width="15.6" height="17.8" viewBox="0 0 15.6 17.8" ><path d="M0 0V17.800L15.600 8.900Z" fill="#1f1f1f"/></svg>
<div class="t " style="left:1430.5px;top:843.0px;font-size:31px;line-height:40px;color:#1f1f1f;letter-spacing:-0.5px;"><span style="font-size:29.1px;letter-spacing:0.4px;margin-left:0.45px;margin-right:-0.45px">响应标头</span> (10)</div>
<div style="left:1397px;top:897px;width:1373px;height:62.5px;background:#f2f4f9;"></div>
<div style="left:1397px;top:959.5px;width:1373px;height:2px;background:#d3e1f9;"></div>
<svg style="left:1409.6px;top:921.8px" width="18" height="15.6" viewBox="0 0 18 15.6" ><path d="M0 0H18L9 15.600Z" fill="#1f1f1f"/></svg>
<div class="t " style="left:1431.7px;top:909.5px;font-size:30px;line-height:40px;color:#1f1f1f;letter-spacing:0.033px;"><span style="font-size:29.1px;letter-spacing:0.93px;margin-left:0.45px;margin-right:-0.45px">请求标头</span></div>
<div style="left:1842.5px;top:913.5px;width:29.5px;height:29.5px;background:#fff;border:2.5px solid #6e6e6e;border-radius:6px;"></div>
<div class="t " style="left:1879.0px;top:909.5px;font-size:30px;line-height:40px;color:#1f1f1f;"><span style="font-size:29.1px;letter-spacing:0.9px;margin-left:0.45px;margin-right:-0.45px">原始</span></div>
<div class="t  l" style="left:1416.6px;top:972.8px;font-size:31px;line-height:40px;color:#1f1f1f;letter-spacing:0.167px;">Accept:</div>
<div class="t  l" style="left:1853.2px;top:972.8px;font-size:31px;line-height:40px;color:#1f1f1f;letter-spacing:0.173px;">text/x-component</div>
<div class="t  l" style="left:1416.6px;top:1022.8px;font-size:31px;line-height:40px;color:#1f1f1f;letter-spacing:0.053px;">Accept-Encoding:</div>
<div class="t  l" style="left:1853.2px;top:1022.8px;font-size:31px;line-height:40px;color:#1f1f1f;letter-spacing:-0.218px;">gzip, deflate, br, zstd</div>
<div class="t  l" style="left:1416.6px;top:1072.8px;font-size:31px;line-height:40px;color:#1f1f1f;letter-spacing:-0.147px;">Accept-Language:</div>
<div class="t  l" style="left:1853.2px;top:1072.8px;font-size:31px;line-height:40px;color:#1f1f1f;letter-spacing:-0.415px;">zh-CN,zh;q=0.9</div>
<div class="t  l" style="left:1416.6px;top:1122.8px;font-size:31px;line-height:40px;color:#1f1f1f;letter-spacing:-0.192px;">Cache-Control:</div>
<div class="t  l" style="left:1853.2px;top:1122.8px;font-size:31px;line-height:40px;color:#1f1f1f;letter-spacing:-0.029px;">no-cache</div>
<div class="t  l" style="left:1416.6px;top:1172.8px;font-size:31px;line-height:40px;color:#1f1f1f;letter-spacing:-0.14px;">Connection:</div>
<div class="t  l" style="left:1853.2px;top:1172.8px;font-size:31px;line-height:40px;color:#1f1f1f;letter-spacing:-0.356px;">keep-alive</div>
<div class="t  l" style="left:1416.6px;top:1222.8px;font-size:31px;line-height:40px;color:#1f1f1f;letter-spacing:-0.057px;">Content-Length:</div>
<div class="t  l" style="left:1853.2px;top:1222.8px;font-size:31px;line-height:40px;color:#1f1f1f;">10</div>
<div class="t  l" style="left:1416.6px;top:1272.8px;font-size:31px;line-height:40px;color:#1f1f1f;letter-spacing:-0.233px;">Content-Type:</div>
<div class="t  l" style="left:1853.2px;top:1272.8px;font-size:31px;line-height:40px;color:#1f1f1f;letter-spacing:-0.243px;">text/plain;charset=UTF-8</div>
<div class="t  l" style="left:1416.6px;top:1322.8px;font-size:31px;line-height:40px;color:#1f1f1f;letter-spacing:0.025px;">Host:</div>
<div class="t  l" style="left:1853.2px;top:1322.8px;font-size:31px;line-height:40px;color:#1f1f1f;letter-spacing:-0.254px;">localhost:3000</div>
<div class="t  l" style="left:1416.6px;top:1372.8px;font-size:31px;line-height:40px;color:#1f1f1f;letter-spacing:0.082px;">Next-Action:</div>
<div class="t  l" style="left:1853.2px;top:1372.8px;font-size:31px;line-height:40px;color:#1f1f1f;letter-spacing:-0.385px;">2307d207a968011acf4c189a56b7e1bd3a76faba</div>
<div class="t  l" style="left:1416.6px;top:1422.8px;font-size:31px;line-height:40px;color:#1f1f1f;letter-spacing:-0.427px;">Next-Router-State-Tree:</div>
<div class="t  l" style="left:1853.2px;top:1422.8px;font-size:31px;line-height:40px;color:#1f1f1f;letter-spacing:0.265px;">%5B%22%22%2C%7B%22children%22%3A%5B%22form2%</div>
<div class="t  l" style="left:1853.2px;top:1472.8px;font-size:31px;line-height:40px;color:#1f1f1f;letter-spacing:-0.159px;">22%2C%7B%22children%22%3A%5B%22__PAGE__%22%2C</div>
<div class="t  l" style="left:1853.2px;top:1522.8px;font-size:31px;line-height:40px;color:#1f1f1f;letter-spacing:0.098px;">%7B%7D%5D%7D%5D%7D%2Cnull%2Cnull%2Ctrue%5D</div>
<div class="t  l" style="left:1416.6px;top:1572.8px;font-size:31px;line-height:40px;color:#1f1f1f;letter-spacing:-0.317px;">Origin:</div>
<div class="t  l" style="left:1853.2px;top:1572.8px;font-size:31px;line-height:40px;color:#1f1f1f;letter-spacing:0.01px;">http://localhost:3000</div>
<div class="t  l" style="left:1416.6px;top:1622.8px;font-size:31px;line-height:40px;color:#1f1f1f;letter-spacing:-0.55px;">Pragma:</div>
<div class="t  l" style="left:1853.2px;top:1622.8px;font-size:31px;line-height:40px;color:#1f1f1f;letter-spacing:-0.029px;">no-cache</div>
<div style="left:1415px;top:1412.3px;width:1101px;height:4.6px;background:#e83a22;"></div>
<div class="t " style="left:2603.7px;top:1639.0px;font-size:18.5px;line-height:26px;color:#b9b9b9;font-family:'Liberation Serif','Noto Serif CJK SC',serif;letter-spacing:-0.637px;">@稀土掘金技术社区</div>
</body></html>
